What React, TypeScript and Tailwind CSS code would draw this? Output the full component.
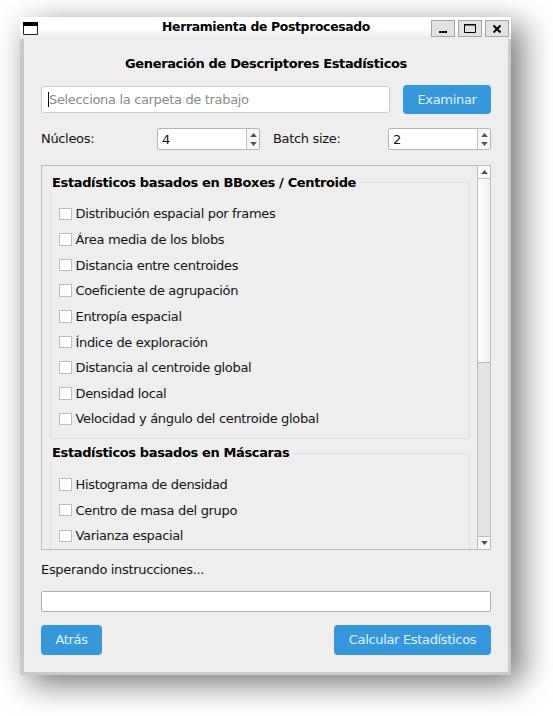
import type { ReactNode } from "react";

const BOX_STATS = [
  "Distribución espacial por frames",
  "Área media de los blobs",
  "Distancia entre centroides",
  "Coeficiente de agrupación",
  "Entropía espacial",
  "Índice de exploración",
  "Distancia al centroide global",
  "Densidad local",
  "Velocidad y ángulo del centroide global",
];

const MASK_STATS = ["Histograma de densidad", "Centro de masa del grupo", "Varianza espacial"];

function Arrow({ up = false }: { up?: boolean }) {
  return (
    <svg width="7" height="4" viewBox="0 0 7 4" className="block" fill="#505050">
      <path d={up ? "M3.5 0 6.8 4H.2Z" : "M.2 0h6.6L3.5 4Z"} />
    </svg>
  );
}

function TitleButton({ children }: { children: ReactNode }) {
  return (
    <button className="flex h-[17px] w-[24px] items-center justify-center border border-[#a3a3a3] bg-[#e2e2e2]">
      <svg width="22" height="15" viewBox="0 0 22 15" fill="none" stroke="#000">
        {children}
      </svg>
    </button>
  );
}

function SpinBox({ value }: { value: string }) {
  return (
    <div className="flex h-[22px] w-[103px] overflow-hidden rounded-[2px] border border-[#b4b4b4] bg-white">
      <span className="flex-1 pl-[4px] pt-px leading-[20px]">{value}</span>
      <span className="flex w-[13px] flex-col items-center justify-center gap-[5px] border-l border-[#c0c0c0] bg-[#f7f7f7]">
        <Arrow up />
        <Arrow />
      </span>
    </div>
  );
}

function StatGroup({ title, items, className }: { title: string; items: string[]; className: string }) {
  return (
    <section className={`w-[420px] ${className}`}>
      <div className="flex h-[18px] items-start">
        <h2 className="flex h-[18px] shrink-0 items-center whitespace-nowrap pl-[2px] pr-[3px] pt-px font-bold tracking-[-0.37px] text-black">
          {title}
        </h2>
        <span className="mt-[9px] h-[9px] flex-1 rounded-tr-[4px] border-r border-t border-[#dfdfdf]" />
      </div>
      <div className="rounded-b-[4px] border-x border-b border-[#dfdfdf] pb-[6px] pl-[8px] pt-[10px]">
        {items.map((item) => (
          <label key={item} className="flex h-[25.65px] items-center gap-[4px] whitespace-nowrap">
            <span className="size-[12.5px] shrink-0 border border-[#bdbdbd] bg-white" />
            <span className="pt-px">{item}</span>
          </label>
        ))}
      </div>
    </section>
  );
}

export default function App() {
  return (
    <div className="h-[716px] w-[553px] overflow-hidden bg-white pl-[20px] pt-[17px] font-['DejaVu_Sans',sans-serif] text-[13px] leading-[18px] tracking-[-0.33px] text-[#141414]">
      <div className="flex h-[658px] w-[491px] flex-col bg-[#cacaca] shadow-[9px_9px_30px_rgba(0,0,0,0.53),30px_0_20px_rgba(0,0,0,0.04)]">
        <header className="flex h-[22px] shrink-0 items-center bg-linear-to-b from-white from-50% to-[#eaeaea] pl-[3px] pr-[2px]">
          <svg width="15" height="13" viewBox="0 0 15 13" className="mr-auto">
            <path d="M.5.5h14v12H.5Z" fill="#fff" stroke="#222" />
            <path d="M0 0h15v4H0Z" fill="#000" />
          </svg>
          <h1 className="mr-[61px] pb-[2px] text-[12.4px] font-bold text-black">Herramienta de Postprocesado</h1>
          <div className="flex gap-[3px]">
            <TitleButton>
              <path d="M7 11h8" strokeWidth="2" />
            </TitleButton>
            <TitleButton>
              <path d="M5.5 3.5h11v8h-11ZM5 4h12" />
            </TitleButton>
            <TitleButton>
              <path d="m7.5 4.5 7 7m0-7-7 7" strokeWidth="2" />
            </TitleButton>
          </div>
        </header>

        <main className="ml-[4px] mr-[3px] h-[633px] bg-[#eeeeee] px-[17px] pt-[16px]">
          <h2 className="text-center font-bold tracking-[-0.37px] text-black">Generación de Descriptores Estadísticos</h2>

          <div className="mt-[12px] flex items-center justify-between">
            <div className="flex h-[27px] w-[349px] items-center rounded-[3px] border border-[#cccccc] bg-white pl-[6px] text-[#8b8b8b]">
              <span className="h-[15px] w-px bg-black" />
              Selecciona la carpeta de trabajo
            </div>
            <button className="h-[29px] w-[88px] rounded-[4px] bg-[#3498db] text-[#e3f1fa]">Examinar</button>
          </div>

          <div className="mt-[14px] flex items-center">
            <span className="w-[116px]">Núcleos:</span>
            <SpinBox value="4" />
            <span className="ml-[13px] w-[115px]">Batch size:</span>
            <SpinBox value="2" />
          </div>

          <div className="mt-[15px] flex h-[385px] overflow-hidden border border-[#bcbcbc]">
            <div className="min-w-0 flex-1 overflow-hidden pl-[8px] pt-[7px]">
              <StatGroup title="Estadísticos basados en BBoxes / Centroide" items={BOX_STATS} className="" />
              <StatGroup title="Estadísticos basados en Máscaras" items={MASK_STATS} className="mt-[5px]" />
            </div>
            <div className="flex w-[13px] flex-col border-l border-[#bcbcbc] bg-[#e3e3e3]">
              <span className="flex h-[13px] items-center justify-center border-b border-[#c0c0c0] bg-[#fafafa]">
                <Arrow up />
              </span>
              <span className="h-[184px] border-b border-[#b8b8b8] bg-linear-to-r from-white to-[#f1f1f1]" />
              <span className="mt-auto flex h-[13px] items-center justify-center border-t border-[#c0c0c0] bg-[#fafafa]">
                <Arrow />
              </span>
            </div>
          </div>

          <p className="mt-[11px]">Esperando instrucciones...</p>
          <div className="mt-[12px] h-[21px] rounded-[2px] border border-[#adadad] bg-white" />

          <div className="mt-[13px] flex justify-between">
            <button className="h-[30px] w-[61px] rounded-[4px] bg-[#3498db] text-[#e3f1fa]">Atrás</button>
            <button className="h-[30px] w-[157px] rounded-[4px] bg-[#3498db] text-[#e3f1fa]">Calcular Estadísticos</button>
          </div>
        </main>
      </div>
    </div>
  );
}
